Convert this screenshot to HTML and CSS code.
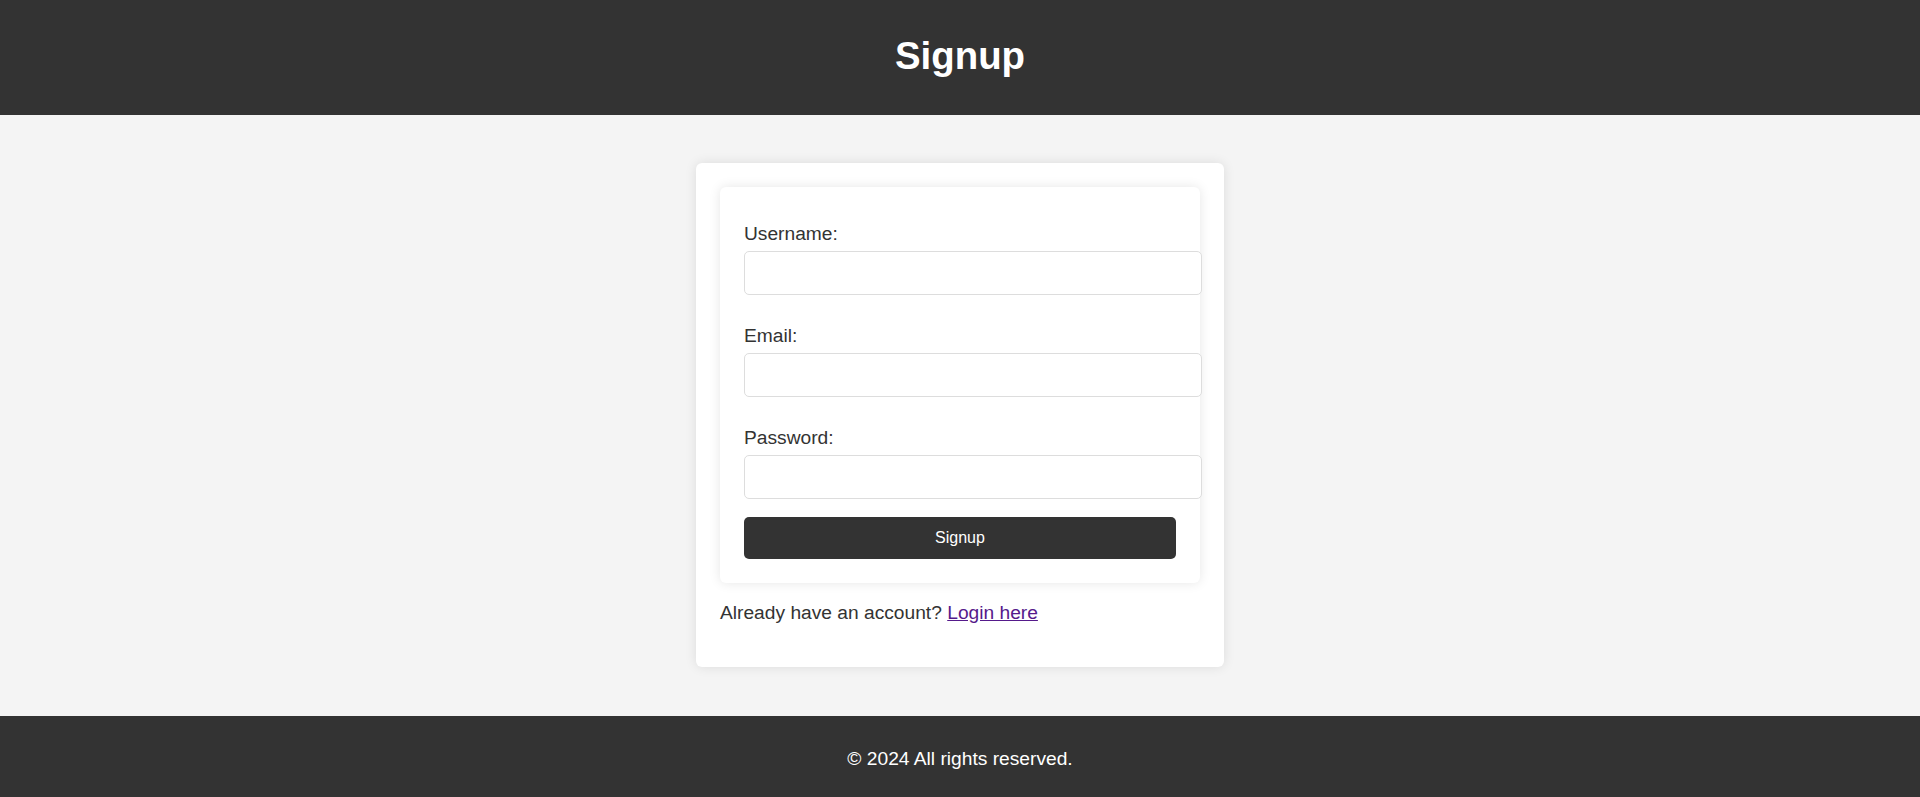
FILE: index.html
```html
<!DOCTYPE html>
<html lang="en">
<head>
<meta charset="utf-8">
<title>Signup</title>
<link rel="stylesheet" href="styles.css">
</head>
<body>
<header class="site-header">
  <h1 class="site-title">Signup</h1>
</header>
<main class="main">
  <div class="card">
    <form class="form">
      <label class="label" for="username">Username:</label>
      <input class="input" type="text" id="username">
      <label class="label" for="email">Email:</label>
      <input class="input" type="email" id="email">
      <label class="label" for="password">Password:</label>
      <input class="input" type="password" id="password">
      <button class="btn" type="button">Signup</button>
    </form>
    <p class="alt">Already have an account? <a class="link" href="#">Login here</a></p>
  </div>
</main>
<footer class="site-footer">
  <p class="footer-text">© 2024 All rights reserved.</p>
</footer>
</body>
</html>
```

FILE: styles.css
```css
* { box-sizing: content-box; }
html, body { margin: 0; padding: 0; }
body {
  font-family: "Liberation Sans", Arial, sans-serif;
  font-size: 19.2px;
  color: #333;
  background: #f4f4f4;
}
.site-header {
  background: #333;
  color: #fff;
  padding: 34px 0 37px;
  text-align: center;
}
.site-title {
  margin: 0;
  font-size: 38.4px;
  font-weight: bold;
  line-height: 44px;
}
.main {
  padding: 48px 0 49px;
  display: flex;
  justify-content: center;
}
.card {
  width: 480px;
  padding: 24px;
  background: #fff;
  border-radius: 6px;
  box-shadow: 0 0 12px rgba(0,0,0,0.1);
}
.form {
  display: flex;
  flex-direction: column;
  align-items: flex-start;
  padding: 24px;
  background: #fff;
  border-radius: 6px;
  box-shadow: 0 0 12px rgba(0,0,0,0.1);
}
.label {
  display: block;
  margin: 12px 0 6px;
  line-height: 22px;
}
.input {
  display: block;
  width: 100%;
  padding: 12px;
  margin: 0 0 18px;
  border: 1px solid #ddd;
  border-radius: 5px;
  font-family: "Liberation Sans", Arial, sans-serif;
  font-size: 16px;
  line-height: 18px;
  background: #fff;
  outline: none;
}
.btn {
  display: block;
  width: 100%;
  box-sizing: border-box;
  height: 42px;
  padding: 12px;
  border: none;
  border-radius: 5px;
  background: #333;
  color: #fff;
  font-family: "Liberation Sans", Arial, sans-serif;
  font-size: 16px;
  line-height: 18px;
  cursor: pointer;
}
.alt {
  margin: 19px 0 19px;
  line-height: 22px;
}
.link {
  color: #551a8b;
  text-decoration: underline;
}
.site-footer {
  background: #333;
  color: #fff;
  text-align: center;
  padding: 32px 0 27px;
}
.footer-text {
  margin: 0;
  line-height: 22px;
}
```
